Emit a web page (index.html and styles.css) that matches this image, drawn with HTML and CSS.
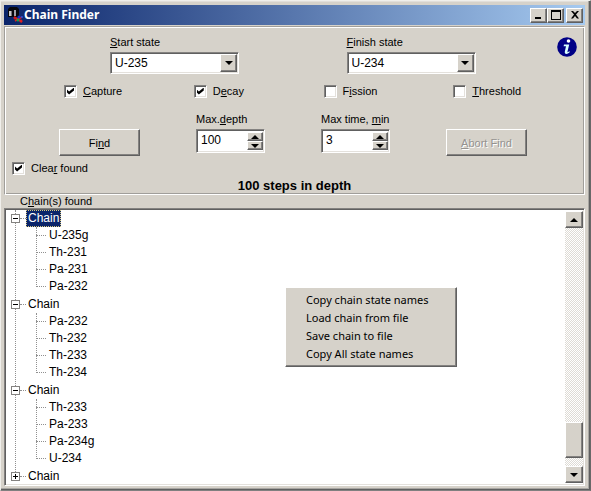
FILE: index.html
```html
<!DOCTYPE html>
<html lang="en">
<head>
<meta charset="utf-8">
<title>Chain Finder</title>
<link rel="stylesheet" href="styles.css">
</head>
<body>
<div class="window">
  <header class="titlebar">
    <svg class="app-icon" width="18" height="18" viewBox="0 0 18 18" aria-hidden="true">
      <path d="M2 3l2-2h7l2 2v8H2z" fill="#08080c"/>
      <path d="M3 5h2v5H3z" fill="#c8c8c8"/><path d="M5 5h1v5H5z" fill="#707078"/><path d="M8 4h2v6H8z" fill="#a0a0a8"/>
      <path d="M8 11l8 5M9 15l7-4" stroke="#e02020" stroke-width="1.5"/>
      <circle cx="9" cy="12" r="1.5" fill="#d01818"/><circle cx="13" cy="11" r="1.5" fill="#1830d0"/>
      <circle cx="12" cy="14" r="1.5" fill="#18a050"/><circle cx="15" cy="15" r="1.5" fill="#e02020"/>
      <circle cx="16" cy="11" r="1" fill="#2050e0"/>
    </svg>
    <h1>Chain Finder</h1>
    <div class="window-buttons">
      <button class="raised" aria-label="Minimize"><svg width="12" height="10" viewBox="0 0 12 10"><path d="M2 7h6v2H2z"/></svg></button>
      <button class="raised" aria-label="Maximize"><svg width="12" height="10" viewBox="0 0 12 10"><path d="M1 0h10v10H1zM2 2v7h8V2z" fill-rule="evenodd"/></svg></button>
      <button class="raised close" aria-label="Close"><svg width="12" height="10" viewBox="0 0 12 10"><path d="M2 1h2l2 2 2-2h2L7 4.500l3 4H8L6 6 4 8.500H2l3-4z"/></svg></button>
    </div>
  </header>

  <form class="panel">
    <button type="button" class="info" aria-label="Information">
      <svg width="20" height="20" viewBox="0 0 20 20"><circle cx="10" cy="10" r="9.800" fill="#000086"/><circle cx="11.500" cy="4" r="1.800" fill="#fff"/><path d="M7 7.500h5.200L10.500 14.500c-.2 1 .7.800 1.500-.3l.9.600c-1.700 2.700-5.600 3-5.100-.1L9 9.200H6.600z" fill="#d8ffff"/></svg>
    </button>
    <div class="states">
      <div class="field">
        <label for="start"><u>S</u>tart state</label>
        <div class="combo sunken">
          <select id="start"><option>U-235</option></select>
          <span class="raised drop"><svg width="8" height="4" viewBox="0 0 8 4"><path d="M0 0h8L4 4z"/></svg></span>
        </div>
      </div>
      <div class="field">
        <label for="finish"><u>F</u>inish state</label>
        <div class="combo sunken">
          <select id="finish"><option>U-234</option></select>
          <span class="raised drop"><svg width="8" height="4" viewBox="0 0 8 4"><path d="M0 0h8L4 4z"/></svg></span>
        </div>
      </div>
    </div>
    <div class="options">
      <label class="check"><input type="checkbox" checked><span><u>C</u>apture</span></label>
      <label class="check"><input type="checkbox" checked><span>D<u>e</u>cay</span></label>
      <label class="check"><input type="checkbox"><span>F<u>i</u>ssion</span></label>
      <label class="check"><input type="checkbox"><span><u>T</u>hreshold</span></label>
    </div>
    <div class="actions">
      <button type="button" class="push raised">Fi<u>n</u>d</button>
      <div class="field">
        <label for="depth">Max.<u>d</u>epth</label>
        <div class="spin sunken">
          <input id="depth" type="text" value="100">
          <div class="steps">
            <button type="button" class="raised" aria-label="Increase depth"><svg width="8" height="4" viewBox="0 0 8 4"><path d="M0 4h8L4 0z"/></svg></button>
            <button type="button" class="raised" aria-label="Decrease depth"><svg width="8" height="4" viewBox="0 0 8 4"><path d="M0 0h8L4 4z"/></svg></button>
          </div>
        </div>
      </div>
      <div class="field">
        <label for="time">Max time, <u>m</u>in</label>
        <div class="spin sunken">
          <input id="time" type="text" value="3">
          <div class="steps">
            <button type="button" class="raised" aria-label="Increase time"><svg width="8" height="4" viewBox="0 0 8 4"><path d="M0 4h8L4 0z"/></svg></button>
            <button type="button" class="raised" aria-label="Decrease time"><svg width="8" height="4" viewBox="0 0 8 4"><path d="M0 0h8L4 4z"/></svg></button>
          </div>
        </div>
      </div>
      <button type="button" class="push raised" disabled><span><u>A</u>bort Find</span></button>
    </div>
    <label class="check clear"><input type="checkbox" checked><span>Clea<u>r</u> found</span></label>
    <p class="status">100 steps in depth</p>
  </form>

  <h2 class="list-title">C<u>h</u>ain(s) found</h2>
  <div class="list sunken">
    <ul class="tree">
      <li class="open"><div class="node"><button class="toggle" aria-label="Collapse"></button><span class="name selected">Chain</span></div>
        <ul><li>U-235g</li><li>Th-231</li><li>Pa-231</li><li>Pa-232</li></ul></li>
      <li class="open"><div class="node"><button class="toggle" aria-label="Collapse"></button><span class="name">Chain</span></div>
        <ul><li>Pa-232</li><li>Th-232</li><li>Th-233</li><li>Th-234</li></ul></li>
      <li class="open"><div class="node"><button class="toggle" aria-label="Collapse"></button><span class="name">Chain</span></div>
        <ul><li>Th-233</li><li>Pa-233</li><li>Pa-234g</li><li>U-234</li></ul></li>
      <li><div class="node"><button class="toggle plus" aria-label="Expand"></button><span class="name">Chain</span></div></li>
    </ul>
    <div class="scrollbar">
      <button class="raised" aria-label="Scroll up"><svg width="8" height="4" viewBox="0 0 8 4"><path d="M0 4h8L4 0z"/></svg></button>
      <div class="track"><div class="thumb raised"></div></div>
      <button class="raised" aria-label="Scroll down"><svg width="8" height="4" viewBox="0 0 8 4"><path d="M0 0h8L4 4z"/></svg></button>
    </div>
  </div>
</div>

<div class="menu raised" role="menu">
  <button role="menuitem">Copy chain state names</button>
  <button role="menuitem">Load chain from file</button>
  <button role="menuitem">Save chain to file</button>
  <button role="menuitem">Copy All state names</button>
</div>
</body>
</html>
```

FILE: styles.css
```css
:root {
  --face: #d6d2ca;
  --light: #ffffff;
  --shadow: #848280;
  --dark: #606060;
}

* { box-sizing: border-box; }

body {
  margin: 0;
  font: 11px/14px "Liberation Sans", Arial, sans-serif;
  color: #000;
  background: var(--face);
}

h1, h2, p, ul { margin: 0; padding: 0; }
ul { list-style: none; }
svg { display: block; flex: none; }

button {
  display: flex;
  align-items: center;
  justify-content: center;
  padding: 0;
  border: 0;
  font: inherit;
  color: inherit;
  background: var(--face);
}

u { text-underline-offset: 1px; text-decoration-thickness: 1px; }

.raised {
  border: 1px solid;
  border-color: var(--light) var(--dark) var(--dark) var(--light);
  box-shadow: inset -1px -1px 0 var(--shadow);
  background: var(--face);
}

.sunken {
  border: 1px solid;
  border-color: var(--shadow) var(--light) var(--light) var(--shadow);
  box-shadow: inset 1px 1px 0 var(--dark), inset -1px -1px 0 #e4e1dc;
  background: #fff;
  padding: 1px;
}

.window {
  display: flex;
  flex-direction: column;
  height: 100vh;
  padding: 4px 5px 4px 3px;
  border: 1px solid;
  border-color: #f0efeb #686868 #808080 #f0efeb;
  box-shadow: inset -1px -1px 0 #606060, inset -2px -2px 0 #a8a6a2, inset 0 1px 0 #e2dfda;
}

.titlebar {
  display: flex;
  align-items: center;
  height: 20px;
  margin-bottom: 1px;
  padding: 0 2px;
  color: #fff;
  background: linear-gradient(90deg, #0a246a, #a6caf0);
}

.titlebar h1 {
  flex: 1;
  font: bold 12px/18px "Noto Sans", sans-serif;
}

.window-buttons { display: flex; color: #000; }
.window-buttons button { width: 17px; height: 15px; }
.window-buttons .close { margin-left: 2px; }

.panel {
  position: relative;
  border: 1px solid;
  border-color: #a09e9a #fff #fff #a09e9a;
  box-shadow: inset 1px 1px 0 #fff, inset -1px -1px 0 #a09e9a;
  padding: 8px 1px 0;
}

.info {
  position: absolute;
  top: 10px;
  right: 7px;
  border-radius: 50%;
}

.field { display: flex; flex-direction: column; gap: 3px; }

.states {
  display: grid;
  grid-template-columns: 1fr 1fr;
  padding-left: 104px;
}

.combo { display: flex; width: 129px; height: 22px; padding: 1px; }

.combo select {
  flex: 1;
  min-width: 0;
  appearance: none;
  border: 0;
  padding: 0 2px;
  margin: 1px;
  font: 12px/16px "Liberation Sans", Arial, sans-serif;
  color: #000;
  background: #fff;
}

.drop {
  display: flex;
  align-items: center;
  justify-content: center;
  width: 17px;
  pointer-events: none;
}

.options {
  display: grid;
  grid-template-columns: repeat(4, 1fr);
  padding: 10px 0 14px 58px;
}

.check { display: flex; align-items: center; gap: 6px; }

.check input {
  display: grid;
  place-items: center;
  appearance: none;
  width: 13px;
  height: 13px;
  margin: 0;
  border: 1px solid;
  border-color: var(--shadow) #fff #fff var(--shadow);
  box-shadow: inset 1px 1px 0 var(--dark), inset -1px -1px 0 #e4e1dc;
  background: #fff;
}

.check input:checked::before {
  content: "";
  width: 7px;
  height: 7px;
  background: #000;
  clip-path: polygon(0 28%, 30% 58%, 100% 0, 100% 42%, 30% 100%, 0 70%);
}

.actions {
  display: flex;
  justify-content: space-between;
  align-items: flex-end;
  padding: 0 56px 0 53px;
}

.actions .field { padding-bottom: 3px; }

.push { width: 81px; height: 27px; }
.push:disabled { color: #949290; text-shadow: 1px 1px 0 #fff; }

.spin { display: flex; width: 69px; height: 24px; }

.spin input {
  flex: 1;
  min-width: 0;
  border: 0;
  margin: 1px;
  padding: 0 2px 2px;
  font: 12px/16px "Liberation Sans", Arial, sans-serif;
}

.steps { display: flex; flex-direction: column; width: 16px; padding: 1px 0; }
.steps button { flex: 1; min-height: 0; }

.clear { padding: 5px 0 3px 6px; }

.status {
  font-size: 13px;
  line-height: 16px;
  font-weight: bold;
  text-align: center;
}

.list-title {
  padding-left: 16px;
  font-size: 11px;
  line-height: 13px;
  font-weight: normal;
}

.list {
  display: flex;
  flex: 1;
  min-height: 0;
  padding: 1px;
}

.tree {
  position: relative;
  flex: 1;
  overflow: hidden;
  font-size: 12px;
  line-height: 17px;
}

.tree::before {
  content: "";
  position: absolute;
  left: 9px;
  top: 0;
  bottom: 8px;
  border-left: 1px dotted #909090;
}

.open { padding-bottom: 1px; }

.node { display: flex; align-items: center; height: 17px; padding-left: 5px; }

.node::before {
  content: "";
  order: 1;
  width: 6px;
  border-top: 1px dotted #909090;
}

.toggle {
  position: relative;
  width: 9px;
  height: 9px;
  border: 1px solid #848280;
  background: linear-gradient(#000, #000) center / 5px 1px no-repeat #fff;
}

.toggle.plus {
  background:
    linear-gradient(#000, #000) center / 5px 1px no-repeat,
    linear-gradient(#000, #000) center / 1px 5px no-repeat,
    #fff;
}

.name { order: 2; padding: 0 2px; line-height: 17px; }

.selected {
  color: #fff;
  background: #0a246a;
  outline: 1px dotted #d8c880;
  outline-offset: -1px;
}

.tree ul { position: relative; padding-left: 30px; }

.tree ul::before {
  content: "";
  position: absolute;
  left: 30px;
  top: 0;
  bottom: 8px;
  border-left: 1px dotted #909090;
}

.tree ul li { display: flex; align-items: center; gap: 3px; height: 17px; }
.tree ul li::before { content: ""; width: 10px; border-top: 1px dotted #909090; }

.scrollbar { display: flex; flex-direction: column; width: 18px; padding: 1px 0; }
.scrollbar button { height: 17px; }

.track {
  display: flex;
  flex: 1;
  flex-direction: column;
  justify-content: flex-end;
  padding-bottom: 8px;
  background: repeating-conic-gradient(#fff 0 25%, #dedbd5 0 50%) 0 0 / 2px 2px;
}

.thumb { height: 36px; }

.menu {
  position: absolute;
  left: 285px;
  top: 287px;
  width: 172px;
  padding: 3px 2px;
}

.menu button {
  width: 100%;
  height: 18px;
  padding-left: 18px;
  justify-content: flex-start;
  font: 11px/18px "Noto Sans", sans-serif;
}
```
